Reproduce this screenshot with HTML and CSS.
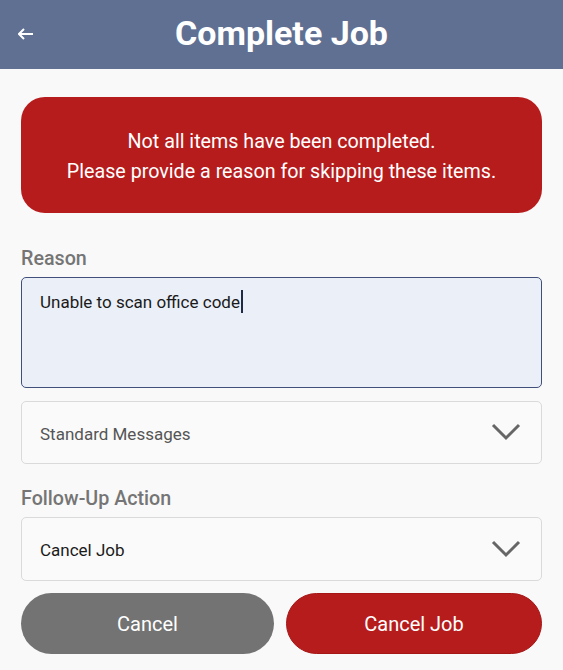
FILE: index.html
```html
<!DOCTYPE html>
<html>
<head>
<meta charset="utf-8">
<link rel="stylesheet" href="styles.css">
</head>
<body>
<header class="appbar">
  <span class="back">
    <svg width="16" height="12" viewBox="0 0 16 12"><path d="M6 1 L1 6 L6 11 M1 6 H15" fill="none" stroke="#fff" stroke-width="2"/></svg>
  </span>
  <h1 class="title">Complete Job</h1>
</header>
<main class="content">
  <div class="alert">
    <p>Not all items have been completed.</p>
    <p>Please provide a reason for skipping these items.</p>
  </div>
  <label class="label label-reason">Reason</label>
  <div class="textarea"><span>Unable to scan office code</span><span class="caret"></span></div>
  <div class="select select-std">
    <span class="placeholder">Standard Messages</span>
    <svg class="chev" width="30" height="19" viewBox="0 0 30 19"><path d="M2 2 L15 15 L28 2" fill="none" stroke="#666" stroke-width="3"/></svg>
  </div>
  <label class="label label-follow">Follow-Up Action</label>
  <div class="select select-follow">
    <span class="value">Cancel Job</span>
    <svg class="chev" width="30" height="19" viewBox="0 0 30 19"><path d="M2 2 L15 15 L28 2" fill="none" stroke="#666" stroke-width="3"/></svg>
  </div>
  <div class="actions">
    <button class="btn btn-grey">Cancel</button>
    <button class="btn btn-red">Cancel Job</button>
  </div>
</main>
</body>
</html>
```

FILE: styles.css
```css
html, body {
  margin: 0;
  padding: 0;
  background: #f9f9f9;
  font-family: Roboto, "Liberation Sans", sans-serif;
}
.appbar {
  height: 69px;
  background: #5f7093;
  display: flex;
  align-items: center;
  justify-content: center;
  position: relative;
}
.back {
  position: absolute;
  left: 18px;
  top: 28px;
  display: flex;
}
.title {
  margin: 0;
  color: #fff;
  font-size: 34px;
  font-weight: 700;
  line-height: 1;
  padding-bottom: 4px;
}
.content {
  padding: 28px 21px 0 21px;
  display: flex;
  flex-direction: column;
}
.alert {
  box-sizing: border-box;
  background: #b71c1c;
  border-radius: 24px;
  height: 116px;
  padding-top: 3px;
  display: flex;
  flex-direction: column;
  align-items: center;
  justify-content: center;
  color: #fff;
  font-size: 19.7px;
  line-height: 30px;
}
.alert p { margin: 0; }
.label {
  color: #757575;
  font-size: 19.7px;
  font-weight: 500;
  line-height: 22px;
}
.label-reason { margin-top: 35px; margin-bottom: 7px; }
.label-follow { margin-top: 24px; margin-bottom: 7px; }
.textarea {
  box-sizing: border-box;
  height: 111px;
  background: #eaeff8;
  border: 1.5px solid #40507a;
  border-radius: 5px;
  padding: 12px 18px;
  font-size: 17px;
  color: #1a1a1a;
  line-height: 24px;
  display: flex;
  align-items: flex-start;
}
.caret {
  display: inline-block;
  width: 2px;
  height: 23px;
  background: #1f2a44;
  margin-left: 1px;
}
.select {
  box-sizing: border-box;
  height: 64px;
  border: 1.5px solid #dadada;
  border-radius: 5px;
  background: #fafafa;
  display: flex;
  align-items: center;
  justify-content: space-between;
  padding: 0 20px 0 18px;
  font-size: 17px;
}
.select-std { margin-top: 13px; height: 63px; }
.placeholder { color: #555; padding-top: 2px; }
.value { color: #1a1a1a; padding-top: 1px; }
.actions {
  margin-top: 12px;
  display: flex;
  gap: 12px;
}
.btn {
  height: 61px;
  border-radius: 31px;
  font-family: Roboto, "Liberation Sans", sans-serif;
  font-size: 20px;
  color: #fff;
  border: none;
  padding-top: 2px;
}
.btn-grey {
  flex: 0 0 253px;
  background: #737373;
}
.btn-red {
  flex: 1;
  background: #b71c1c;
  border: 1.5px solid #a51717;
}
```
